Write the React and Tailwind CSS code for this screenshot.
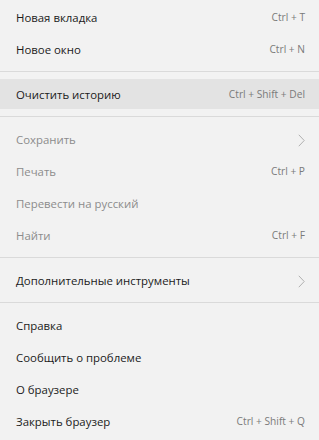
import React from 'react';

const groups = [
  [
    { label: 'Новая вкладка', hint: 'Ctrl + T' },
    { label: 'Новое окно', hint: 'Ctrl + N' },
  ],
  [{ label: 'Очистить историю', hint: 'Ctrl + Shift + Del', active: true }],
  [
    { label: 'Сохранить', sub: true, off: true },
    { label: 'Печать', hint: 'Ctrl + P', off: true },
    { label: 'Перевести на русский', off: true },
    { label: 'Найти', hint: 'Ctrl + F', off: true },
  ],
  [{ label: 'Дополнительные инструменты', sub: true }],
  [
    { label: 'Справка' },
    { label: 'Сообщить о проблеме' },
    { label: 'О браузере' },
    { label: 'Закрыть браузер', hint: 'Ctrl + Shift + Q' },
  ],
];

function Chevron() {
  return (
    <svg width="7" height="13" viewBox="0 0 7 13" className="text-[#b0b0b0]">
      <path d="M0.8 0.8 L6.2 6.5 L0.8 12.2" fill="none" stroke="currentColor" strokeWidth="1" />
    </svg>
  );
}

function Row({ item }) {
  return (
    <div
      className={`h-[30px] flex items-center justify-between pl-4 pr-[14px] pt-[2px] ${
        item.active ? 'bg-[#e3e3e3]' : ''
      }`}
    >
      <span className={`text-[11.4px] ${item.off ? 'text-[#8c8c8c]' : 'text-[#1b1b1b]'}`}>{item.label}</span>
      {item.hint && <span className="text-[10.2px] text-[#7a7a7a]">{item.hint}</span>}
      {item.sub && <Chevron />}
    </div>
  );
}

export default function App() {
  return (
    <div className="w-[319px] h-[440px] bg-[#f2f2f2] pt-[2px] overflow-hidden font-['Open_Sans',sans-serif]">
      {groups.map((group, gi) => (
        <div key={gi}>
          {gi > 0 && (
            <div className="py-[7px]">
              <div className="h-px bg-[#dadada]" />
            </div>
          )}
          <div className="flex flex-col gap-[2px]">
            {group.map((item) => (
              <Row key={item.label} item={item} />
            ))}
          </div>
        </div>
      ))}
    </div>
  );
}
